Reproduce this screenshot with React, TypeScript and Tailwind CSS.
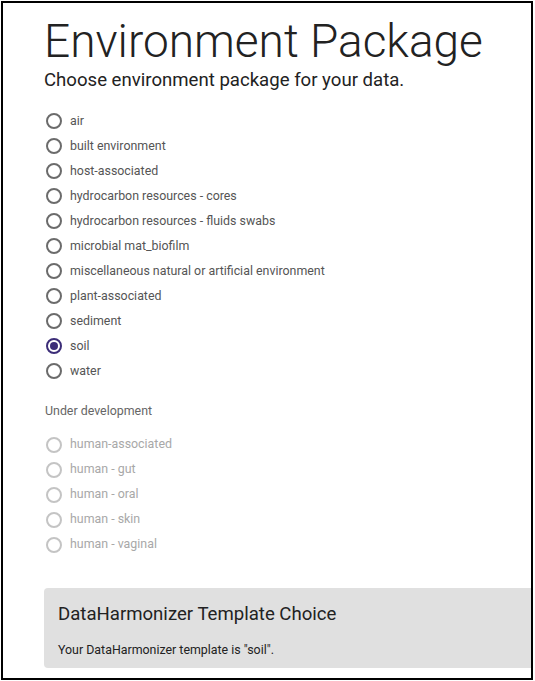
import React from "react";

const main = [
  "air",
  "built environment",
  "host-associated",
  "hydrocarbon resources - cores",
  "hydrocarbon resources - fluids swabs",
  "microbial mat_biofilm",
  "miscellaneous natural or artificial environment",
  "plant-associated",
  "sediment",
  "soil",
  "water",
];
const dev = ["human-associated", "human - gut", "human - oral", "human - skin", "human - vaginal"];

function Radio({ label, checked, disabled }: { label: string; checked?: boolean; disabled?: boolean }) {
  return (
    <div className="flex items-center h-[25px]">
      <span
        className={
          "w-[16px] h-[16px] rounded-full border-2 flex items-center justify-center " +
          (checked ? "border-[#3c2d78]" : disabled ? "border-[#c4c4c4]" : "border-[#6b6b6b]")
        }
      >
        {checked && <span className="w-[8px] h-[8px] rounded-full bg-[#3c2d78]" />}
      </span>
      <span className={"ml-[8px] text-[12.4px] whitespace-nowrap " + (disabled ? "text-[#a8a8a8]" : "text-[#555]")}>
        {label}
      </span>
    </div>
  );
}

export default function App() {
  return (
    <div className="w-[535px] h-[681px] bg-white p-[1px]" style={{ fontFamily: "Roboto, 'Liberation Sans', sans-serif" }}>
      <div className="w-[532px] h-[679px] border-2 border-black overflow-hidden">
        <div className="pl-[41px]">
          <h1 className="text-[46px] font-light leading-none text-[#222] mt-[15px] whitespace-nowrap">Environment Package</h1>
          <p className="text-[18.6px] leading-none text-[#222] mt-[7px] whitespace-nowrap">Choose environment package for your data.</p>
          <div className="mt-[19px] pl-[2px]">
            {main.map((m) => (
              <Radio key={m} label={m} checked={m === "soil"} />
            ))}
          </div>
          <div className="mt-[21px] pl-[1px] text-[12.4px] text-[#666] leading-none">Under development</div>
          <div className="mt-[15px] pl-[2px]">
            {dev.map((m) => (
              <Radio key={m} label={m} disabled />
            ))}
          </div>
          <div className="mt-[31px] bg-[#e0e0e0] rounded-l-[4px] h-[80px] w-[520px] pl-[14px] pt-[17px]">
            <div className="text-[18.6px] text-[#222] leading-none whitespace-nowrap">DataHarmonizer Template Choice</div>
            <div className="text-[12.4px] text-[#222] mt-[20px] leading-none whitespace-nowrap">Your DataHarmonizer template is "soil".</div>
          </div>
        </div>
      </div>
    </div>
  );
}
